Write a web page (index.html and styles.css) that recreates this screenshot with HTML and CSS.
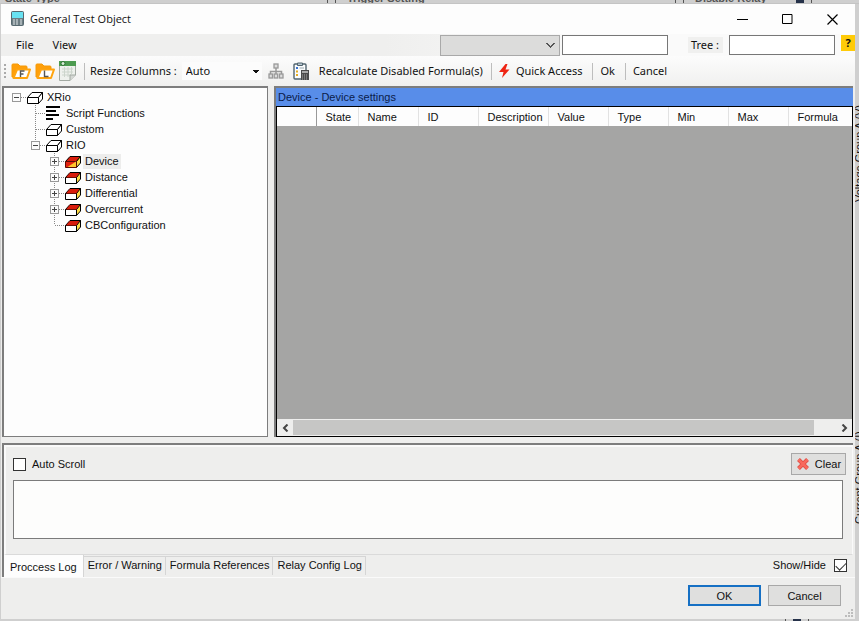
FILE: index.html
```html
<!DOCTYPE html>
<html lang="en">
<head>
<meta charset="utf-8">
<title>General Test Object</title>
<link rel="stylesheet" href="styles.css">
</head>
<body>
<svg class="defs" aria-hidden="true">
  <symbol id="box" viewBox="0 0 17 16">
    <path d="M1.500 8.500 6 3.500H16.500L12.500 8.500Z" fill="#fff" stroke="#000"/>
    <path d="M12.500 8.500 16.500 3.500V10L12.500 14.500Z" fill="#fff" stroke="#000"/>
    <path d="M1.500 8.500H12.500V14.500H1.500Z" fill="#fff" stroke="#000"/>
  </symbol>
  <symbol id="redbox" viewBox="0 0 17 16">
    <path d="M1.500 8.500 6 3.500H16.500L12.500 8.500Z" fill="#d91c0b" stroke="#000"/>
    <path d="M12.500 8.500 16.500 3.500V10L12.500 14.500Z" fill="#ffdc45" stroke="#000"/>
    <path d="M1.500 8.500H12.500V14.500H1.500Z" fill="#fff" stroke="#000"/>
    <path d="M2 8.500 6 4H15.500L12 8.500Z" fill="#d91c0b"/>
  </symbol>
  <symbol id="redboxsel" viewBox="0 0 17 16">
    <path d="M1.500 8.500 6 3.500H16.500L12.500 8.500Z" fill="#d91c0b" stroke="#000"/>
    <path d="M12.500 8.500 16.500 3.500V10L12.500 14.500Z" fill="#ffdc45" stroke="#000"/>
    <path d="M1.500 8.500H12.500V14.500H1.500Z" fill="#e32210" stroke="#5a0c05"/>
    <path d="M12 8.500V14H3.500Z" fill="#ffc62b"/>
  </symbol>
  <symbol id="script" viewBox="0 0 17 16">
    <path d="M1 2H15M1 6H11M1 10H14M1 14H8" stroke="#000" stroke-width="2"/>
  </symbol>
  <symbol id="minus" viewBox="0 0 19 16">
    <path d="M14 8.500H19" stroke="#888" stroke-dasharray="1 1"/>
    <rect x="5.500" y="4.500" width="8" height="8" fill="#fbfbfb" stroke="#999"/>
    <path d="M7 8.500H12" stroke="#444"/>
  </symbol>
  <symbol id="lastminus" viewBox="0 0 19 16">
    <path d="M9.500 0V4" stroke="#888" stroke-dasharray="1 1"/><use href="#minus" width="19" height="16"/>
  </symbol>
  <symbol id="plus" viewBox="0 0 19 16">
    <path d="M9.500 0V16M14 8.500H19" stroke="#888" stroke-dasharray="1 1"/>
    <rect x="5.500" y="4.500" width="8" height="8" fill="#fbfbfb" stroke="#999"/>
    <path d="M7 8.500H12M9.500 6V11" stroke="#444"/>
  </symbol>
  <symbol id="tee" viewBox="0 0 19 16">
    <path d="M9.500 0V16M10 8.500H19" stroke="#888" stroke-dasharray="1 1"/>
  </symbol>
  <symbol id="ell" viewBox="0 0 19 16">
    <path d="M9.500 0V8M10 8.500H19" stroke="#888" stroke-dasharray="1 1"/>
  </symbol>
  <symbol id="folder" viewBox="0 0 20 18">
    <path d="M1 15V3Q1 2 2 2H7L9 4H15Q16 4 16 5V7H6L3 15Z" fill="#ff9f0a" stroke="#f59a08"/>
    <path d="M6 7.500H19L16 16H2.500Z" fill="#fff" stroke="#ffa40f" stroke-width="2" stroke-linejoin="round"/>
  </symbol>
</svg>

<div class="behind behind-top" aria-hidden="true">
  <span class="frag frag-a">State Type</span><i class="rule"></i><i class="rule"></i>
  <span class="frag frag-b">Trigger Setting</span><i class="rule"></i><i class="rule"></i>
  <span class="frag frag-c">Disable Relay</span><i class="chip"></i><i class="rule"></i>
</div>
<div class="stage">
  <main class="window">
    <header class="titlebar">
      <svg class="app-icon" width="13" height="16" viewBox="0 0 13 16" aria-hidden="true">
        <rect x=".5" y=".5" width="12" height="14" rx="1" fill="#6d7d83" stroke="#566970"/>
        <rect x="1" y="1" width="11" height="6" fill="#68e2f2"/>
        <path d="M2 9H4M5 9H7M9 9H11M2 11H4M5 11H7M9 11H11M2 13H4M5 13H7M9 13H11" stroke="#e0e6e8"/>
      </svg>
      <h1 class="title">General Test Object</h1>
      <div class="window-controls">
        <button type="button" aria-label="Minimize"><svg width="11" height="11"><path d="M0 5.500H11" stroke="#000"/></svg></button>
        <button type="button" aria-label="Maximize"><svg width="11" height="11"><path d="M.5.5H10V9.500H.5Z" fill="none" stroke="#000"/></svg></button>
        <button type="button" aria-label="Close"><svg width="11" height="11"><path d="M.5.5 10.500 10.500M10.500.5.5 10.500" stroke="#000" stroke-width="1.200"/></svg></button>
      </div>
    </header>

    <div class="menubar">
      <button type="button" class="menu">File</button>
      <button type="button" class="menu">View</button>
      <div class="filters">
        <select class="filter-select" aria-label="Filter" disabled><option></option></select>
        <input class="field" type="text" aria-label="Search">
        <label class="tree-label" for="tree-search">Tree :</label>
        <input class="field" type="text" id="tree-search">
        <button type="button" class="help">?</button>
      </div>
    </div>

    <div class="toolbar">
      <svg class="grip" width="3" height="18" aria-hidden="true"><path d="M1 2V18" stroke="#aaa" stroke-width="2" stroke-dasharray="2 2"/></svg>
      <button type="button" class="tool" aria-label="Open file"><svg width="20" height="18" viewBox="0 0 20 18"><use href="#folder"/><path d="M13.500 9H9.500V15M9.500 12H12.500" fill="none" stroke="#555" stroke-width="1.400"/></svg></button>
      <button type="button" class="tool" aria-label="Open library"><svg width="20" height="18" viewBox="0 0 20 18"><use href="#folder"/><path d="M9.500 8.500V14.500H13.500" fill="none" stroke="#555" stroke-width="1.400"/></svg></button>
      <button type="button" class="tool sheet" aria-label="Table"><svg width="17" height="20" viewBox="0 0 17 20">
        <path d="M.5 1H16.500V14L11 19.500H.5Z" fill="#eef1ed" stroke="#a3aaa3"/>
        <path d="M0 0H17V5H0Z" fill="#4c9b50"/><circle cx="4" cy="2.500" r="2" fill="#d8ecd8" stroke="#2f7535"/>
        <path d="M3 8H14M3 11H14M3 14H12M5.500 6V16M9 6V16M12.500 6V13" stroke="#ccd5cc"/>
        <path d="M16.500 14H11V19.500" fill="#d4d8d4" stroke="#a3aaa3"/></svg></button>
      <i class="sep"></i>
      <label class="resize-label" for="resize">Resize Columns :</label>
      <select class="resize" id="resize"><option>Auto</option></select>
      <button type="button" class="tool" aria-label="Hierarchy"><svg width="16" height="16" viewBox="0 0 16 16">
        <path d="M8 5V11M2.500 11V8.500H13.500V11" fill="none" stroke="#999" stroke-width="1.500"/>
        <g fill="#ddd" stroke="#999" stroke-width="1.300"><rect x="6" y="1" width="4" height="4"/><rect x="1" y="11" width="3.500" height="4"/><rect x="6.200" y="11" width="3.500" height="4"/><rect x="11.500" y="11" width="3.500" height="4"/></g></svg></button>
      <button type="button" class="tool recalc"><svg width="17" height="19" viewBox="0 0 17 19">
        <rect x="1" y="2" width="12" height="15" rx="1" fill="#fafcfd" stroke="#51646f" stroke-width="1.400"/>
        <path d="M4.500 1H9.500V3.500H4.500Z" fill="#b9c8d2" stroke="#51646f"/>
        <path d="M3 6H5" stroke="#3b72cf" stroke-width="2"/><path d="M3 9.500H5M3 13H5" stroke="#e6ad21" stroke-width="2"/><path d="M6.500 6H11" stroke="#9aa8b0"/>
        <rect x="8" y="8" width="8" height="10" fill="#4b4b4b"/><rect x="9" y="9" width="6" height="2" fill="#aaa"/>
        <path d="M9 13H15M9 15H15M9 17H15" stroke="#aaa" stroke-dasharray="1 1"/></svg>Recalculate Disabled Formula(s)</button>
      <i class="sep"></i>
      <button type="button" class="tool quick"><svg width="11" height="14" viewBox="0 0 11 14"><path d="M6.500 0 0 8H4.500L3 14 10.500 5.500H6.500L8.500 0Z" fill="#ee2413"/></svg>Quick Access</button>
      <i class="sep"></i>
      <button type="button" class="tool word">Ok</button>
      <i class="sep"></i>
      <button type="button" class="tool word">Cancel</button>
    </div>

    <div class="work">
      <nav class="tree" aria-label="Object tree">
        <ul>
          <li><svg class="cell"><use href="#minus"/></svg><svg class="node"><use href="#box"/></svg><span class="label">XRio</span></li>
          <li class="l1"><svg class="cell"><use href="#tee"/></svg><svg class="node"><use href="#script"/></svg><span class="label">Script Functions</span></li>
          <li class="l1"><svg class="cell"><use href="#tee"/></svg><svg class="node"><use href="#box"/></svg><span class="label">Custom</span></li>
          <li class="l1"><svg class="cell"><use href="#lastminus"/></svg><svg class="node"><use href="#box"/></svg><span class="label">RIO</span></li>
          <li class="l2"><svg class="cell"><use href="#plus"/></svg><svg class="node"><use href="#redboxsel"/></svg><span class="label selected">Device</span></li>
          <li class="l2"><svg class="cell"><use href="#plus"/></svg><svg class="node"><use href="#redbox"/></svg><span class="label">Distance</span></li>
          <li class="l2"><svg class="cell"><use href="#plus"/></svg><svg class="node"><use href="#redbox"/></svg><span class="label">Differential</span></li>
          <li class="l2"><svg class="cell"><use href="#plus"/></svg><svg class="node"><use href="#redbox"/></svg><span class="label">Overcurrent</span></li>
          <li class="l2"><svg class="cell"><use href="#ell"/></svg><svg class="node"><use href="#redbox"/></svg><span class="label">CBConfiguration</span></li>
        </ul>
      </nav>
      <section class="details">
        <h2 class="caption">Device - Device settings</h2>
        <div class="grid">
          <table>
            <colgroup><col class="c-head"><col class="c-state"><col class="c-std"><col class="c-std"><col class="c-desc"><col class="c-std"><col class="c-std"><col class="c-std"><col class="c-std"><col></colgroup>
            <thead><tr><th></th><th>State</th><th>Name</th><th>ID</th><th>Description</th><th>Value</th><th>Type</th><th>Min</th><th>Max</th><th>Formula</th></tr></thead>
          </table>
          <div class="scrollbar">
            <button type="button" aria-label="Scroll left"><svg width="7" height="8"><path d="M5.500.5 2 4 5.500 7.500" fill="none" stroke="#444" stroke-width="2"/></svg></button>
            <div class="track"><div class="thumb"></div></div>
            <button type="button" aria-label="Scroll right"><svg width="7" height="8"><path d="M1.500.5 5 4 1.500 7.500" fill="none" stroke="#444" stroke-width="2"/></svg></button>
          </div>
        </div>
      </section>
    </div>

    <section class="log">
      <div class="page">
        <div class="log-head">
          <label class="check"><input type="checkbox">Auto Scroll</label>
          <button type="button" class="push clear"><svg width="14" height="14" viewBox="0 0 14 14"><path d="M2.500 2.500 11.500 11.500M11.500 2.500 2.500 11.500" stroke="#dc4b42" stroke-width="4"/><path d="M2.500 2.500 11.500 11.500M11.500 2.500 2.500 11.500" stroke="#f8695d" stroke-width="2.500"/></svg>Clear</button>
        </div>
        <textarea aria-label="Process log"></textarea>
      </div>
      <div class="tabs">
        <button type="button" class="tab active">Proccess Log</button>
        <button type="button" class="tab">Error / Warning</button>
        <button type="button" class="tab">Formula References</button>
        <button type="button" class="tab">Relay Config Log</button>
        <label class="check show">Show/Hide<input type="checkbox" checked></label>
      </div>
    </section>

    <footer class="footer">
      <button type="button" class="push ok">OK</button>
      <button type="button" class="push cancel">Cancel</button>
      <svg class="resize-grip" width="9" height="9" aria-hidden="true"><path d="M6 0H8V2H6ZM3 3H5V5H3ZM6 3H8V5H6ZM0 6H2V8H0ZM3 6H5V8H3ZM6 6H8V8H6Z" fill="#bdbdbd"/></svg>
    </footer>
  </main>
  <div class="behind behind-side" aria-hidden="true">
    <span class="side-text">Voltage Group A (V)</span>
    <span class="side-text">Current Group A (I)</span>
  </div>
</div>
<div class="behind behind-bottom" aria-hidden="true"><i class="rule"></i><i class="chip"></i><i class="rule"></i></div>
</body>
</html>
```
FILE: styles.css
```css
* { box-sizing: border-box; }

body {
  margin: 0;
  height: 100vh;
  display: flex;
  flex-direction: column;
  overflow: hidden;
  background: #cfcfcf;
  color: #111;
  font: 11px/14px "Liberation Sans", Arial, sans-serif;
}

button, input, select, textarea {
  font: inherit;
  color: inherit;
  margin: 0;
  padding: 0;
  border-radius: 0;
}

button { border: 0; background: none; }
svg { display: block; flex: none; }
.defs { position: absolute; width: 0; height: 0; }

/* Slivers of the window underneath */
.behind { overflow: hidden; background: #cfcfcf; color: #555; }
.behind-top {
  height: 4px;
  flex: none;
  display: flex;
  align-items: flex-end;
  gap: 7px;
  border-bottom: 1px solid #c4c4c4;
  font-weight: bold;
}
.frag { line-height: 10px; white-space: nowrap; }
.frag-a { padding-left: 5px; width: 320px; }
.frag-b { padding-left: 4px; width: 325px; }
.frag-c { padding-left: 4px; width: 98px; }
.rule { width: 1px; height: 4px; background: #555; }
.chip { width: 8px; height: 4px; background: #26324a; }
.behind-bottom {
  height: 2px;
  flex: none;
  display: flex;
  justify-content: flex-end;
  gap: 7px;
  padding-right: 50px;
}
.stage { flex: 1; min-height: 0; display: flex; padding-left: 1px; }
.behind-side {
  width: 4px;
  flex: none;
  display: flex;
  flex-direction: column;
  align-items: flex-start;
  padding-top: 98px;
  gap: 222px;
}
.side-text {
  writing-mode: vertical-rl;
  transform: rotate(180deg);
  height: 100px;
  line-height: 8px;
  color: #111;
  white-space: nowrap;
}

.window {
  flex: 1;
  min-width: 0;
  display: flex;
  flex-direction: column;
  background: #eeeeed;
}

/* Title bar */
.titlebar {
  height: 30px;
  flex: none;
  display: flex;
  align-items: center;
  padding-left: 10px;
  background: #fdfdfd;
}
.title {
  margin: 0 0 0 6px;
  font: 11px/16px "Open Sans", "Noto Sans", sans-serif;
}
.menubar, .toolbar { font: 11px/16px "Noto Sans", "Open Sans", sans-serif; }
.window-controls { margin-left: auto; display: flex; }
.window-controls button { width: 45px; height: 28px; display: grid; place-items: center; }

/* Menu bar */
.menubar {
  height: 22px;
  flex: none;
  display: flex;
  align-items: center;
  padding-left: 15px;
  gap: 19px;
  background: linear-gradient(90deg, #efefee 45%, #fafafa 70%);
}
.filters { margin-left: auto; display: flex; align-items: center; }
.filter-select {
  appearance: none;
  width: 120px;
  height: 21px;
  margin-right: 2px;
  border: 1px solid #a9a9a9;
  background:
    linear-gradient(45deg, transparent 46%, #555 46%, #555 62%, transparent 62%) right 8px center / 5px 5px no-repeat,
    linear-gradient(-45deg, transparent 46%, #555 46%, #555 62%, transparent 62%) right 4px center / 5px 5px no-repeat,
    #dcdcdb;
  opacity: 1;
}
.field { width: 106px; height: 20px; border: 1px solid #777; background: #fff; padding: 0 3px; }
.tree-label {
  margin: 0 6px 0 20px;
  padding: 0 4px 0 3px;
  background: #f0f0ef;
}
.help {
  width: 14px;
  height: 16px;
  margin-left: 6px;
  align-self: flex-start;
  background: #ffcb08;
  font-weight: bold;
  line-height: 14px;
}

/* Toolbar */
.toolbar {
  height: 30px;
  flex: none;
  display: flex;
  align-items: center;
  padding-left: 3px;
  background: linear-gradient(#fcfcfc, #f0f0ef);
}
.tool { display: flex; align-items: center; margin-left: 4px; white-space: nowrap; }
.recalc { margin-left: 9px; gap: 9px; }
.quick { gap: 6px; margin: 0 2px; }
.word { margin: 0 2px; }
.sep { width: 1px; height: 17px; margin: 0 5px 0 8px; background: #bdbdbd; flex: none; }
.resize-label { white-space: nowrap; }
.resize {
  appearance: none;
  width: 80px;
  height: 18px;
  margin: 0 2px 0 5px;
  padding-left: 4px;
  border: 0;
  background-color: #fcfcfc;
  background-image: linear-gradient(#111, #111), linear-gradient(#111, #111), linear-gradient(#111, #111);
  background-size: 6px 1px, 4px 1px, 2px 1px;
  background-position: right 3px top 8px, right 4px top 9px, right 5px top 10px;
  background-repeat: no-repeat;
}

/* Tree and detail grid */
.work { flex: 1; min-height: 0; display: flex; gap: 6px; padding: 0 2px 6px 1px; }
.tree {
  width: 266px;
  flex: none;
  border: 1px solid #7d7d7d;
  border-width: 2px 1px 1px 2px;
  background: #fdfdfd;
}
.tree ul { list-style: none; margin: 0; padding: 1px 0 0 3px; }
.tree li { display: flex; height: 16px; align-items: center; }
.l1 { margin-left: 19px; }
.l2 { margin-left: 38px; }
.cell { width: 19px; height: 16px; }
.node { width: 17px; height: 16px; }
.label { padding: 0 2px; margin-left: 2px; line-height: 15px; }
.selected { background: #ededec; }

.details {
  flex: 1;
  min-width: 0;
  display: flex;
  flex-direction: column;
  border: solid #7d7d7d;
  border-width: 2px 0 0 2px;
}
.caption {
  margin: 0;
  height: 18px;
  padding-left: 2px;
  background: #588de9;
  color: #0b1c4a;
  font: inherit;
  line-height: 18px;
}
.grid {
  flex: 1;
  display: flex;
  flex-direction: column;
  border: 1px solid #000;
  background: #a5a5a4;
}
table { width: 100%; table-layout: fixed; border-collapse: collapse; background: #fdfdfd; }
th {
  height: 19px;
  padding: 0 0 0 9px;
  border-right: 1px solid #e2e2e2;
  text-align: left;
  font-weight: normal;
}
th:first-child { border-right-color: #999; }
th:last-child { border-right: 0; }
.c-head { width: 39px; }
.c-state { width: 42px; }
.c-std { width: 60px; }
.c-desc { width: 70px; }
.scrollbar { margin-top: auto; height: 17px; display: flex; background: #eeeeed; }
.scrollbar button { width: 16px; display: grid; place-items: center; }
.track { flex: 1; padding: 1px 0; }
.thumb { width: 96%; height: 100%; background: #c6c6c5; }

/* Log panel */
.log {
  flex: none;
  margin: 0 2px 0 1px;
  border: solid #7d7d7d;
  border-width: 2px 0 0 2px;
}
.page {
  border: solid #fafafa;
  border-width: 2px 1px 0 2px;
  border-bottom: 1px solid #dadada;
  padding: 6px 9px 15px 7px;
}
.log-head { display: flex; align-items: center; justify-content: space-between; margin-right: -3px; height: 22px; }
.check { display: flex; align-items: center; gap: 6px; }
input[type="checkbox"] {
  appearance: none;
  width: 13px;
  height: 13px;
  border: 1px solid #333;
  background: #fff;
}
input[type="checkbox"]:checked {
  display: grid;
  justify-items: center;
  padding-top: 2px;
}
input[type="checkbox"]:checked::before {
  content: "";
  width: 9px;
  height: 5px;
  border: solid #333;
  border-width: 0 0 1px 1px;
  transform: rotate(-45deg);
}
textarea {
  display: block;
  width: 100%;
  height: 59px;
  margin-top: 5px;
  border: 1px solid #7b7b7b;
  background: #fdfdfc;
  resize: none;
}
.push { background: #dfdfde; border: 1px solid #a8a8a8; }
.clear { width: 55px; height: 22px; display: flex; align-items: center; justify-content: center; gap: 5px; }

.tabs { display: flex; height: 22px; }
.tab { height: 19px; margin-top: 1px; padding: 0 3px 2px 4px; border: solid #d5d5d5; border-width: 1px 1px 0 0; }
.active { height: 22px; margin: 0; padding: 2px 6px 0; background: #fdfdfd; border-top: 0; }
.show { margin: 0 6px 2px auto; gap: 8px; }

.footer {
  height: 42px;
  flex: none;
  display: flex;
  gap: 7px;
  justify-content: flex-end;
  padding: 7px 14px 0 0;
  border-top: 1px solid #fafafa;
  position: relative;
}
.footer .push { width: 73px; height: 21px; }
.footer .ok { border: 2px solid #1670c4; }
.resize-grip { position: absolute; right: 1px; bottom: 1px; }
```
